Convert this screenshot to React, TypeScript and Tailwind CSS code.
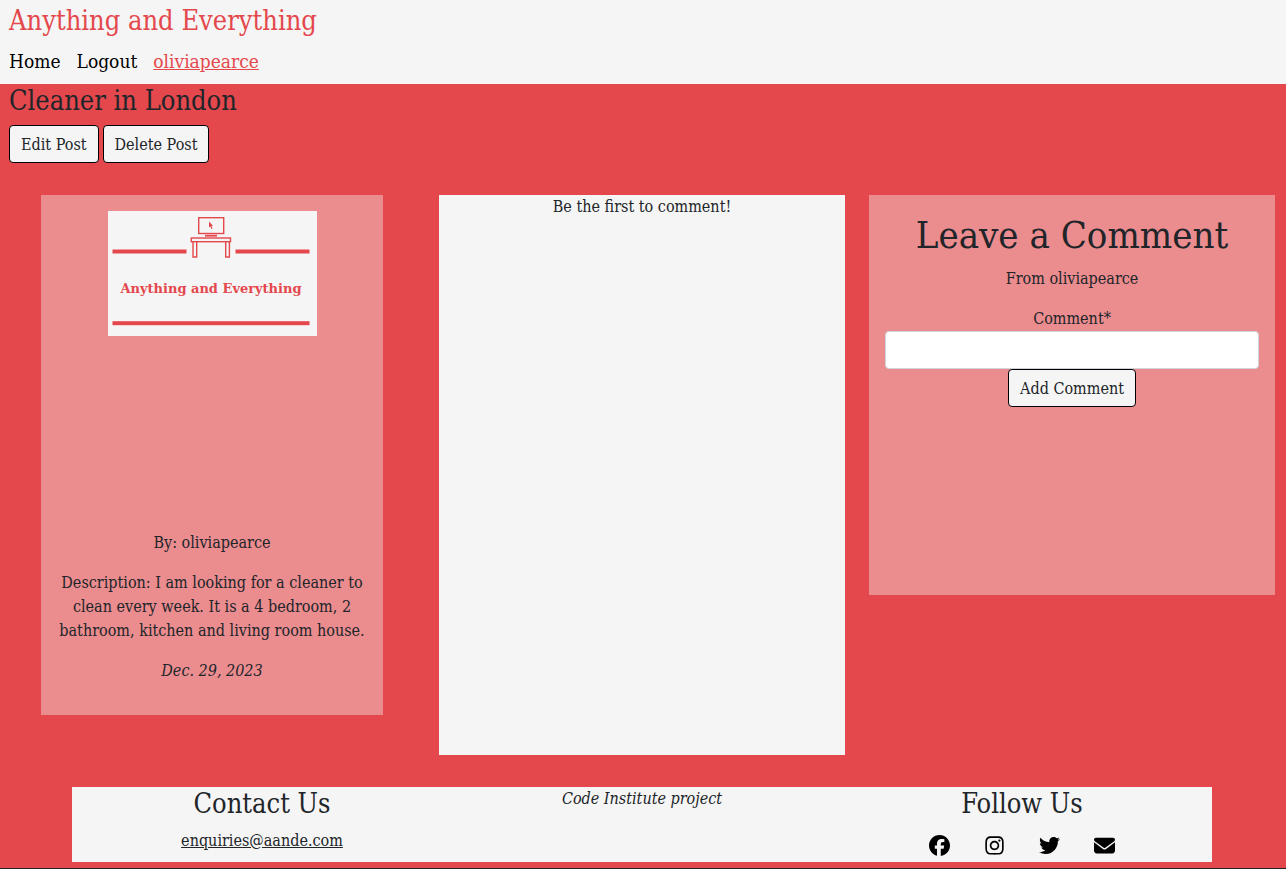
import { FaEnvelope, FaFacebook, FaInstagram, FaTwitter } from "react-icons/fa6";

const buttonClass =
  "h-[38px] rounded-[4px] border border-black bg-[#f5f5f5] px-[11px] pt-px text-base leading-6 whitespace-nowrap";

const socialLinks = [
  { label: "Facebook", icon: FaFacebook },
  { label: "Instagram", icon: FaInstagram },
  { label: "Twitter", icon: FaTwitter },
  { label: "Email", icon: FaEnvelope },
];

function Logo() {
  return (
    <svg
      viewBox="0 0 209 125"
      className="h-[125px] w-[209px] shrink-0 bg-[#f5f5f5]"
      role="img"
      aria-label="Anything and Everything"
    >
      <g fill="#e4484c">
        <rect x="4.5" y="38.5" width="74" height="4" />
        <rect x="127.5" y="38.5" width="74" height="4" />
        <rect x="4.5" y="110.2" width="197" height="4" />
        <rect x="97" y="23.8" width="12" height="1.8" />
        <path d="M101 10.5v6l1.3-1 1.3 2.4 1-.5-1.2-2.3 1.6-.4z" />
      </g>
      <g fill="none" stroke="#e4484c" strokeWidth="1.4">
        <rect x="90.7" y="6.7" width="25" height="15.8" />
        <rect x="83.3" y="27" width="39.2" height="3.7" />
        <path d="M85 30.7V46h3.7V30.7M117.7 30.7V46h3.7V30.7" />
      </g>
      <text
        x="103"
        y="82"
        textAnchor="middle"
        className="fill-[#e4484c] font-['DejaVu_Serif',serif] text-[13px] font-bold"
      >
        Anything and Everything
      </text>
    </svg>
  );
}

export default function App() {
  return (
    <div className="border-b border-[#212529] bg-[#e4484c] pb-[6px] font-['DejaVu_Serif_Condensed','DejaVu_Serif',serif] text-base leading-6 text-[#212529]">
      <header className="h-[84px] bg-[#f5f5f5] px-[9px] pt-1">
        <h1 className="text-[27px] leading-[34px] text-[#e4484c]">Anything and Everything</h1>
        <nav className="mt-2 flex gap-4 text-[19px] leading-[30px] text-black">
          <a href="#home">Home</a>
          <a href="#logout">Logout</a>
          <a href="#profile" className="text-[#e4484c] underline">
            oliviapearce
          </a>
        </nav>
      </header>

      <main className="pr-[11px] pl-[9px]">
        <h2 className="text-[27px] leading-[34px]">Cleaner in London</h2>
        <div className="mt-[7px] flex gap-1">
          <button type="button" className={buttonClass}>Edit Post</button>
          <button type="button" className={buttonClass}>Delete Post</button>
        </div>

        <div className="mt-8 grid grid-cols-3 items-start gap-6 text-center">
          <article className="mx-8 flex min-h-[520px] flex-col items-center bg-[#eb8c8f] p-4">
            <div className="h-80">
              <Logo />
            </div>
            <p className="mb-4">By: oliviapearce</p>
            <p className="mb-4">
              Description: I am looking for a cleaner to clean every week. It is a 4 bedroom, 2
              bathroom, kitchen and living room house.
            </p>
            <p className="italic">Dec. 29, 2023</p>
          </article>

          <section className="min-h-[560px] bg-[#f5f5f5]">
            <p>Be the first to comment!</p>
          </section>

          <section className="min-h-[400px] bg-[#eb8c8f] p-4">
            <h2 className="mb-2 text-[38px] leading-[48px]">Leave a Comment</h2>
            <p className="mb-4">From oliviapearce</p>
            <form onSubmit={(event) => event.preventDefault()}>
              <label htmlFor="comment" className="block">Comment*</label>
              <input
                id="comment"
                className="block h-[38px] w-full rounded-[4px] border border-[#ced4da] bg-white px-3"
              />
              <button type="submit" className={buttonClass}>Add Comment</button>
            </form>
          </section>
        </div>
      </main>

      <div className="mt-8 pr-[2px]">
        <footer className="mx-auto grid min-h-[75px] max-w-[1140px] grid-cols-3 bg-[#f5f5f5] text-center">
          <section>
            <h2 className="mb-2 text-[27px] leading-[34px]">Contact Us</h2>
            <a href="mailto:enquiries@aande.com" className="underline">enquiries@aande.com</a>
          </section>
          <p className="italic">Code Institute project</p>
          <section>
            <h2 className="mb-2 text-[27px] leading-[34px]">Follow Us</h2>
            <ul className="flex justify-center gap-[34px] pt-[6px] text-black">
              {socialLinks.map(({ label, icon: Icon }) => (
                <li key={label}>
                  <a href={`#${label.toLowerCase()}`} aria-label={label}>
                    <Icon className="size-[21px]" />
                  </a>
                </li>
              ))}
            </ul>
          </section>
        </footer>
      </div>
    </div>
  );
}
